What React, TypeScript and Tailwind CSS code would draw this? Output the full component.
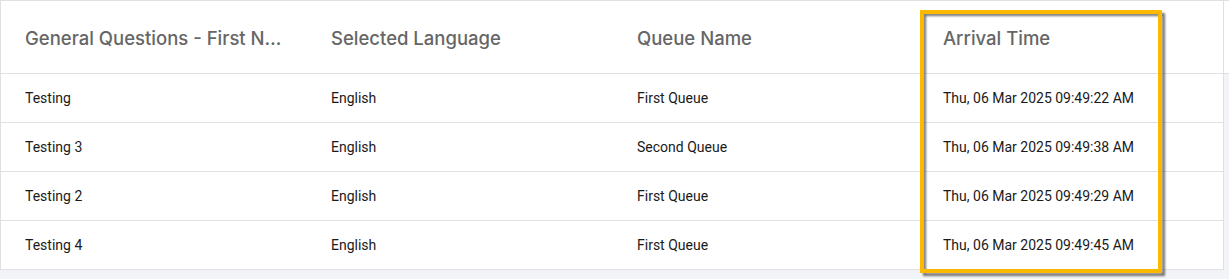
const columns = ['General Questions - First Name', 'Selected Language', 'Queue Name', 'Arrival Time']

const rows = [
  ['Testing', 'English', 'First Queue', 'Thu, 06 Mar 2025 09:49:22 AM'],
  ['Testing 3', 'English', 'Second Queue', 'Thu, 06 Mar 2025 09:49:38 AM'],
  ['Testing 2', 'English', 'First Queue', 'Thu, 06 Mar 2025 09:49:29 AM'],
  ['Testing 4', 'English', 'First Queue', 'Thu, 06 Mar 2025 09:49:45 AM'],
]

const grid = 'grid grid-cols-[306px_306px_306px_304px]'

export default function App() {
  return (
    <div className="relative w-[1229px] h-[279px] overflow-hidden bg-[#f3f4f7] font-['Roboto',sans-serif]">
      <div className="bg-white border-t border-b border-[#e0e0e0]">
        <div className={`${grid} w-[1224px] h-[72px] border-l border-r border-[#e0e0e0] items-center pt-1`}>
          {columns.map((c) => (
            <div
              key={c}
              className="pl-6 pr-6 truncate font-['Inter',sans-serif] text-[18.5px] font-medium text-[#666666] leading-normal"
            >
              {c}
            </div>
          ))}
        </div>
      </div>
      <div className="w-[1224px] bg-white border-l border-r border-[#e0e0e0]">
        {rows.map((r, i) => (
          <div key={i} className={`${grid} h-[49px] border-b border-[#e0e0e0] items-center`}>
            {r.map((cell, j) => (
              <div key={j} className="pl-6 text-[14px] text-[#1a1a1a] leading-normal">
                {cell}
              </div>
            ))}
          </div>
        ))}
      </div>

      {/* highlight annotation */}
      <div className="absolute left-[923px] top-[13px] w-[242px] h-[263px] border-[3px] border-[#3a3a3a] opacity-70 blur-[1px]" />
      <div className="absolute left-[920px] top-[10px] w-[242px] h-[263px] border-4 border-[#fcb900]" />
    </div>
  )
}
